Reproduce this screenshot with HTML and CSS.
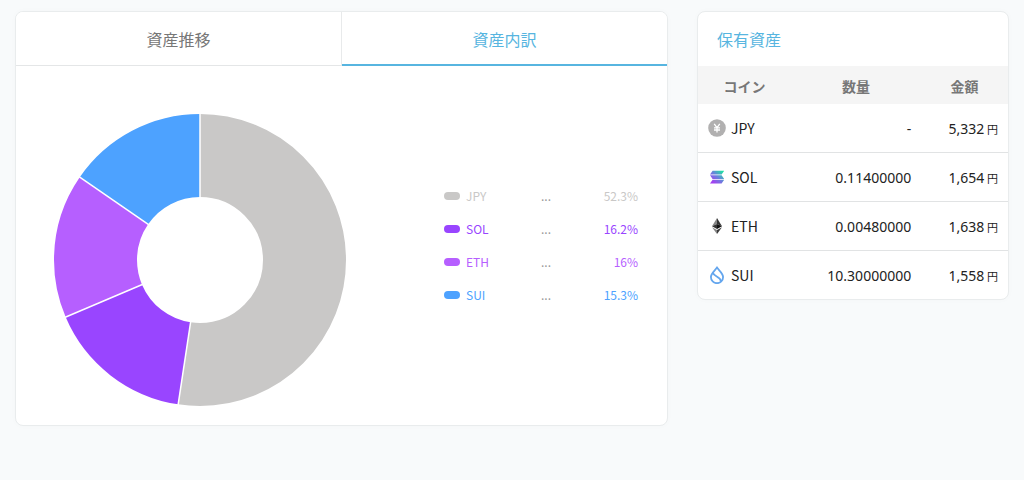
FILE: index.html
```html
<!DOCTYPE html>
<html lang="ja">
<head>
    <meta charset="UTF-8">
    <meta name="viewport" content="width=device-width, initial-scale=1.0">
    <title>保有資産</title>
    <link rel="stylesheet" href="styles.css">
</head>
<body>
    <main class="container">
        <section class="card chart-card">
            <div class="tabs">
                <button type="button" class="tab">資産推移</button>
                <button type="button" class="tab active">資産内訳</button>
            </div>
            <div class="chart-body">
                <svg class="donut" viewBox="-146 -146 292 292" aria-hidden="true">
                    <g fill="none" stroke-width="83" transform="rotate(-90)">
                        <circle r="104.5" stroke="#c9c8c7" pathLength="1000" stroke-dasharray="524 476"/>
                        <circle r="104.5" stroke="#9945ff" pathLength="1000" stroke-dasharray="162 838" stroke-dashoffset="-524"/>
                        <circle r="104.5" stroke="#b65fff" pathLength="1000" stroke-dasharray="160 840" stroke-dashoffset="-686"/>
                        <circle r="104.5" stroke="#4da2ff" pathLength="1000" stroke-dasharray="154 846" stroke-dashoffset="-846"/>
                    </g>
                    <g stroke="#fff" stroke-width="1.5">
                        <path d="M0-62V-147"/>
                        <path d="M0-62V-147" transform="rotate(188.6)"/>
                        <path d="M0-62V-147" transform="rotate(247)"/>
                        <path d="M0-62V-147" transform="rotate(304.6)"/>
                    </g>
                </svg>
                <ul class="legend">
                    <li class="legend-item jpy"><span class="mark"></span><span>JPY</span><span class="dots">...</span><span class="percent">52.3%</span></li>
                    <li class="legend-item sol"><span class="mark"></span><span>SOL</span><span class="dots">...</span><span class="percent">16.2%</span></li>
                    <li class="legend-item eth"><span class="mark"></span><span>ETH</span><span class="dots">...</span><span class="percent">16%</span></li>
                    <li class="legend-item sui"><span class="mark"></span><span>SUI</span><span class="dots">...</span><span class="percent">15.3%</span></li>
                </ul>
            </div>
        </section>

        <section class="card assets-card">
            <h2>保有資産</h2>
            <table class="assets">
                <thead>
                    <tr>
                        <th class="col-coin">コイン</th>
                        <th class="col-amount">数量</th>
                        <th>金額</th>
                    </tr>
                </thead>
                <tbody>
                    <tr>
                        <td>
                            <div class="coin">
                                <svg viewBox="0 0 18 18" aria-hidden="true">
                                    <circle cx="9" cy="9" r="8.8" fill="#b1b0b0"/>
                                    <path d="M6.2 4.9 9 8.7l2.8-3.8M9 8.7v4.8M6 8.8h6M6 11h6" fill="none" stroke="#fff" stroke-width="1.3"/>
                                </svg>
                                JPY
                            </div>
                        </td>
                        <td>-</td>
                        <td>5,332 <small>円</small></td>
                    </tr>
                    <tr>
                        <td>
                            <div class="coin">
                                <svg viewBox="0 0 18 18" aria-hidden="true">
                                    <defs>
                                        <linearGradient id="solana" gradientUnits="userSpaceOnUse" x1="14" y1="3" x2="4" y2="14">
                                            <stop offset="0" stop-color="#1fe0a4"/>
                                            <stop offset=".5" stop-color="#6a80dc"/>
                                            <stop offset="1" stop-color="#a53df2"/>
                                        </linearGradient>
                                    </defs>
                                    <path d="M4.6 2.8h11.6L13.6 6.4H2zM2 7.3h11.6l2.6 3.6H4.6zM4.6 11.8h11.6l-2.6 3.6H2z" fill="url(#solana)"/>
                                </svg>
                                SOL
                            </div>
                        </td>
                        <td>0.11400000</td>
                        <td>1,654 <small>円</small></td>
                    </tr>
                    <tr>
                        <td>
                            <div class="coin">
                                <svg viewBox="0 0 18 18" aria-hidden="true">
                                    <path d="M9 1 4 9.2 9 7z" fill="#858585"/>
                                    <path d="M9 1v6l5 2.2z" fill="#343434"/>
                                    <path d="M9 7 4 9.2 9 12z" fill="#343434"/>
                                    <path d="M9 7v5l5-2.8z" fill="#111"/>
                                    <path d="M4 10.3 9 17v-3.9z" fill="#858585"/>
                                    <path d="M14 10.3 9 17v-3.9z" fill="#3a3a3a"/>
                                </svg>
                                ETH
                            </div>
                        </td>
                        <td>0.00480000</td>
                        <td>1,638 <small>円</small></td>
                    </tr>
                    <tr>
                        <td>
                            <div class="coin">
                                <svg viewBox="0 0 18 18" aria-hidden="true">
                                    <path d="M9 1.6C7 4.4 2.9 7.6 2.9 11.1a6.1 6.1 0 0 0 12.2 0C15.1 7.6 11 4.4 9 1.6z" fill="none" stroke="#64a6ee" stroke-width="1.8"/>
                                    <path d="M4.9 6.6C5.6 10.8 12.6 10.2 12.9 15.2" fill="none" stroke="#64a6ee" stroke-width="1.8"/>
                                </svg>
                                SUI
                            </div>
                        </td>
                        <td>10.30000000</td>
                        <td>1,558 <small>円</small></td>
                    </tr>
                </tbody>
            </table>
        </section>
    </main>
</body>
</html>
```
FILE: styles.css
```css
* {
    box-sizing: border-box;
}

body {
    margin: 0;
    background: #f8fafb;
    color: #222;
    font-family: "Noto Sans CJK JP", sans-serif;
    font-size: 14px;
}

.container {
    display: flex;
    align-items: flex-start;
    gap: 29px;
    padding: 11px 15px;
}

.card {
    background: #fff;
    border: 1px solid #e9eced;
    border-radius: 8px;
    box-shadow: 0 0 6px rgba(0, 0, 0, 0.02);
    overflow: hidden;
}

.chart-card {
    flex: 1;
}

.assets-card {
    width: 312px;
}

/* タブ */
.tabs {
    display: flex;
}

.tab {
    flex: 1;
    height: 54px;
    padding: 0;
    border: 0;
    border-right: 1px solid #e8eaeb;
    border-bottom: 1px solid #e4e6e7;
    background: #fff;
    color: #777;
    font-family: inherit;
    font-size: 16px;
    cursor: pointer;
}

.tab.active {
    border-right: 0;
    border-bottom-color: #57b5e0;
    box-shadow: inset 0 -1px #57b5e0;
    color: #57b5e0;
}

/* 円グラフと凡例 */
.chart-body {
    display: flex;
    justify-content: space-between;
    align-items: flex-start;
    padding: 48px 29px 19px 38px;
}

.donut {
    width: 292px;
    height: 292px;
}

.legend {
    width: 194px;
    margin: 65px 0 0;
    padding: 0;
    list-style: none;
    font-size: 12px;
    line-height: 33px;
}

.legend-item {
    display: grid;
    grid-template-columns: 16px 75px 1fr auto;
    column-gap: 6px;
    align-items: center;
}

.legend-item .mark {
    height: 8px;
    border-radius: 4px;
    background: currentColor;
}

.legend-item .dots {
    margin-left: -6px;
    color: #999;
}

.jpy { color: #c9c8c7; }
.sol { color: #9945ff; }
.eth { color: #b65fff; }
.sui { color: #4da2ff; }

/* 保有資産 */
.assets-card h2 {
    margin: 0;
    padding: 0 19px;
    color: #57b5e0;
    font-size: 16px;
    font-weight: normal;
    line-height: 54px;
}

.assets {
    width: 100%;
    table-layout: fixed;
    border-spacing: 0;
}

.assets th {
    height: 38px;
    padding: 2px 0 0;
    background: #f5f5f5;
    color: #777;
    font-weight: bold;
}

.col-coin {
    width: 30%;
}

.col-amount {
    width: 42%;
}

.assets td {
    height: 49px;
    padding: 0 10px;
    border-bottom: 1px solid #e1e3e4;
    font-family: "Noto Sans", "Noto Sans CJK JP", sans-serif;
    text-align: right;
}

.assets tr:last-child td {
    height: 48px;
    border-bottom: 0;
}

.assets small {
    margin-left: -1px;
    font-size: 11px;
}

.coin {
    display: flex;
    align-items: center;
    gap: 5px;
    font-family: "Noto Sans CJK JP", sans-serif;
}

.coin svg {
    width: 18px;
    height: 18px;
}
```
